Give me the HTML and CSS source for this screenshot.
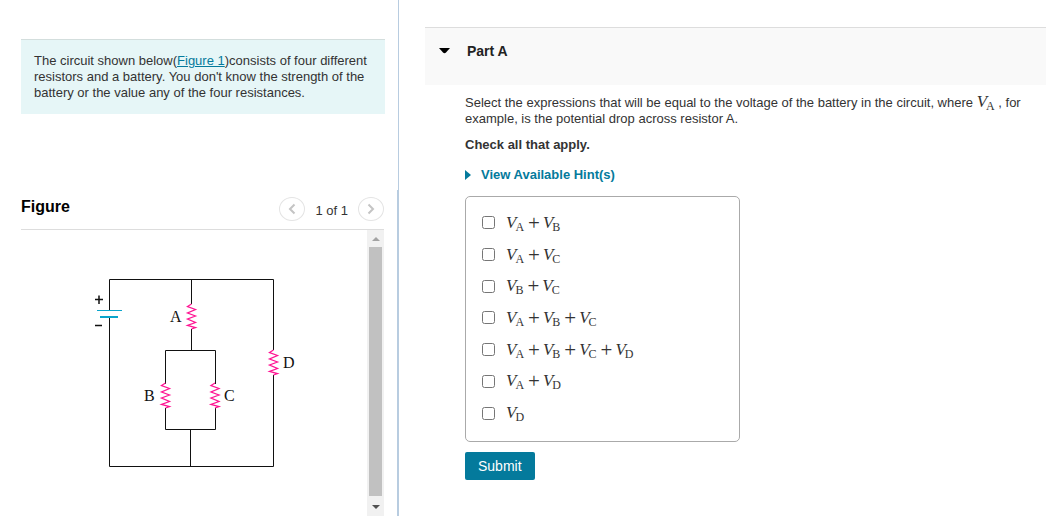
FILE: index.html
```html
<!DOCTYPE html>
<html lang="en">
<head>
  <meta charset="UTF-8" />
  <meta name="viewport" content="width=device-width, initial-scale=1.0"/>
  <title>Part A</title>
  <link rel="stylesheet" href="styles.css">
</head>
<body>

  <!-- Problem text and figure -->
  <aside class="left">
    <div class="intro">
      <p class="note">The circuit shown below(<a href="#figure">Figure 1</a>)consists of four different resistors and a battery. You don't know the strength of the battery or the value any of the four resistances.</p>
    </div>

    <section class="figure" id="figure">
      <header class="figure-head">
        <h2>Figure</h2>
        <div class="pager">
          <button type="button" class="round" aria-label="Previous figure">
            <svg width="8" height="12" viewBox="0 0 8 12"><path d="M6.5 1.5 L2 6 L6.5 10.5"/></svg>
          </button>
          <span class="count">1 of 1</span>
          <button type="button" class="round" aria-label="Next figure">
            <svg width="8" height="12" viewBox="0 0 8 12"><path d="M1.5 1.5 L6 6 L1.5 10.5"/></svg>
          </button>
        </div>
      </header>

      <div class="figure-body">
        <svg class="circuit" width="220" height="200" viewBox="0 0 220 200">
          <defs>
            <path id="zigzag" d="M0 0L-4 2.5L4 5.5L-4 9L4 12L-4 15L4 18.5L-4 21.5L4 23.5L0 25"/>
          </defs>
          <!-- wires -->
          <g class="wire">
            <path d="M29.5 40V9.5H193.5V80M193.5 105V196.5H29.5V48"/>
            <path d="M111.5 9.5V34M111.5 59V80.5M85.5 114V80.5H135.5V114M85.5 138V159.5H135.5V138M110.5 159.5V196.5"/>
          </g>
          <!-- battery -->
          <path class="plate" d="M17 40.5H42"/>
          <path class="plate thick" d="M20 47H38"/>
          <path class="sign" d="M15 29.5H23M19 25.5V34M15 55.5H22"/>
          <!-- resistors -->
          <g class="resistor">
            <use href="#zigzag" x="111.5" y="34"/>
            <use href="#zigzag" x="85.5" y="113"/>
            <use href="#zigzag" x="135" y="113"/>
            <use href="#zigzag" x="193.5" y="80"/>
          </g>
          <text x="90" y="52">A</text>
          <text x="64" y="131">B</text>
          <text x="144" y="131">C</text>
          <text x="203" y="98">D</text>
        </svg>
        <div class="scrollbar">
          <span class="arrow up"></span>
          <span class="thumb"></span>
          <span class="arrow down"></span>
        </div>
      </div>
    </section>
  </aside>

  <!-- Question -->
  <main class="right">
    <header class="part-head">
      <svg width="12" height="6" viewBox="0 0 12 6"><path d="M0 0H11L7 4.5Q5.5 6 4 4.5Z"/></svg>
      <h2>Part A</h2>
    </header>

    <form class="question">
      <p class="prompt">Select the expressions that will be equal to the voltage of the battery in the circuit, where <span class="math"><i>V</i><sub>A</sub></span> , for example, is the potential drop across resistor A.</p>
      <p class="check-all">Check all that apply.</p>
      <a class="hints" href="#">
        <svg width="6" height="10" viewBox="0 0 6 10"><path d="M0 0L6 5L0 10Z"/></svg>
        View Available Hint(s)
      </a>

      <div class="options">
        <label><input type="checkbox"><span class="math"><i>V</i><sub>A</sub><b>+</b><i>V</i><sub>B</sub></span></label>
        <label><input type="checkbox"><span class="math"><i>V</i><sub>A</sub><b>+</b><i>V</i><sub>C</sub></span></label>
        <label><input type="checkbox"><span class="math"><i>V</i><sub>B</sub><b>+</b><i>V</i><sub>C</sub></span></label>
        <label><input type="checkbox"><span class="math"><i>V</i><sub>A</sub><b>+</b><i>V</i><sub>B</sub><b>+</b><i>V</i><sub>C</sub></span></label>
        <label><input type="checkbox"><span class="math"><i>V</i><sub>A</sub><b>+</b><i>V</i><sub>B</sub><b>+</b><i>V</i><sub>C</sub><b>+</b><i>V</i><sub>D</sub></span></label>
        <label><input type="checkbox"><span class="math"><i>V</i><sub>A</sub><b>+</b><i>V</i><sub>D</sub></span></label>
        <label><input type="checkbox"><span class="math"><i>V</i><sub>D</sub></span></label>
      </div>

      <button type="submit" class="submit">Submit</button>
    </form>
  </main>

</body>
</html>
```

FILE: styles.css
```css
* {
  box-sizing: border-box;
}

body {
  margin: 0;
  display: flex;
  min-height: 100vh;
  background: #fff;
  color: #333;
  font-family: "Liberation Sans", Arial, sans-serif;
  font-size: 13px;
  line-height: 16px;
}

h2,
p {
  margin: 0;
}

/* left column */
.left {
  flex: 0 0 399px;
  display: flex;
  flex-direction: column;
}

.intro {
  min-height: 190px;
  padding: 39px 13px 0 21px;
  border-right: 1px solid #b8cce0;
}

.note {
  padding: 13px;
  border-top: 1px solid #d3dedd;
  background: #e6f6f7;
}

a {
  color: #047a9c;
}

.figure {
  flex: 1;
  display: flex;
  flex-direction: column;
  padding: 0 13px 0 21px;
  border-right: 2px solid #b8cce0;
}

.figure-head {
  display: flex;
  justify-content: space-between;
  height: 40px;
  border-bottom: 1px solid #ddd;
}

.figure-head h2 {
  padding-top: 9px;
  color: #000;
  font-size: 16px;
}

.pager {
  display: flex;
  align-items: flex-start;
  gap: 10px;
  padding-top: 7px;
}

.count {
  padding-top: 6px;
}

.round {
  display: flex;
  align-items: center;
  justify-content: center;
  width: 26px;
  height: 24px;
  padding: 0;
  border: 1px solid #e4e4e4;
  border-radius: 50%;
  background: #fff;
}

.round path {
  fill: none;
  stroke: #c4c4c4;
  stroke-width: 2;
}

.figure-body {
  flex: 1;
  display: flex;
  justify-content: space-between;
}

.circuit {
  margin: 40px 0 0 59px;
}

.wire {
  fill: none;
  stroke: #111;
}

.plate {
  stroke: #0aa5cc;
}

.thick {
  stroke-width: 2;
}

.sign {
  stroke: #111;
  stroke-width: 1.5;
}

.resistor {
  fill: none;
  stroke: #ff1493;
  stroke-width: 1.3;
}

.circuit text {
  fill: #111;
  font-family: "Liberation Serif", "Times New Roman", serif;
  font-size: 16px;
}

.scrollbar {
  display: flex;
  flex-direction: column;
  align-items: center;
  width: 17px;
  padding: 7px 0;
  background: #f1f1f1;
}

.thumb {
  flex: 1;
  width: 13px;
  margin: 6px 0 9px;
  background: #c1c1c1;
}

.arrow {
  border: 4px solid transparent;
}

.up {
  border-top: 0;
  border-bottom-color: #a3a3a3;
}

.down {
  border-bottom: 0;
  border-top-color: #505050;
}

/* right column */
.right {
  flex: 1;
  padding: 27px 13px 0 26px;
}

.part-head {
  display: flex;
  gap: 16px;
  min-height: 58px;
  padding: 15px 14px;
  border-top: 1px solid #ddd;
  background: #f9f9f9;
  color: #222;
}

.part-head svg {
  margin-top: 5px;
}

.part-head h2 {
  font-size: 14px;
}

.question {
  padding: 10px 20px 0 40px;
}

.check-all {
  margin-top: 10px;
  font-weight: bold;
}

.hints {
  display: flex;
  align-items: center;
  gap: 10px;
  margin-top: 14px;
  font-weight: bold;
  text-decoration: none;
}

.hints svg {
  fill: #047a9c;
}

.math {
  font-family: "Liberation Serif", "Times New Roman", serif;
  font-size: 17px;
  line-height: 0;
}

.math sub {
  margin-left: -1px;
  font-size: 12px;
  line-height: 0;
  vertical-align: -3px;
}

.math b {
  margin: 0 3px 0 4px;
  font-size: 21px;
  font-weight: normal;
  line-height: 0;
  vertical-align: -2px;
}

.options {
  display: grid;
  grid-auto-rows: 1fr;
  width: 275px;
  min-height: 246px;
  margin-top: 13px;
  padding: 10px 16px 12px;
  border: 1px solid #aaa;
  border-radius: 5px;
}

.options label {
  display: flex;
  align-items: center;
  gap: 11px;
}

.options .math {
  line-height: 16px;
}

.options input {
  width: 13px;
  height: 13px;
  margin: 0;
}

.submit {
  height: 28px;
  margin-top: 10px;
  padding: 0 13px;
  border: 0;
  border-radius: 2px;
  background: #047a9c;
  color: #fff;
  font-family: inherit;
  font-size: 14px;
}
```
